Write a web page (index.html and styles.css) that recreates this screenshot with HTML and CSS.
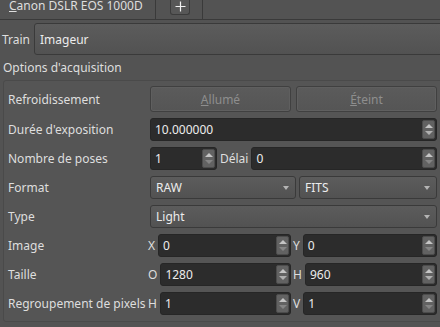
FILE: index.html
```html
<!DOCTYPE html>
<html lang="fr">
<head>
    <meta charset="UTF-8">
    <title>Canon DSLR EOS 1000D</title>
    <link rel="stylesheet" href="styles.css">
</head>
<body>
    <div class="tabbar">
        <div class="tab"><span class="tab-text"><u>C</u>anon DSLR EOS 1000D</span></div>
        <div class="corner">
            <div class="add">
                <svg width="11" height="11" viewBox="0 0 11 11"><path d="M5.5 0.5v10M0.5 5.5h10" stroke="#f2f2f2" stroke-width="1.2" fill="none"/></svg>
            </div>
        </div>
    </div>

    <div class="train-row">
        <span class="train-label">Train</span>
        <div class="combo train-combo">Imageur</div>
    </div>

    <div class="section-title">Options d'acquisition</div>

    <div class="group">
        <div class="row row-tall">
            <span class="label">Refroidissement</span>
            <div class="ctrl split">
                <button class="btn" disabled><u>A</u>llumé</button>
                <button class="btn" disabled><u>É</u>teint</button>
            </div>
        </div>

        <div class="row">
            <span class="label">Durée d'exposition</span>
            <div class="ctrl">
                <div class="spin grow"><span class="val">10.000000</span><span class="arrows"><i class="up"></i><i class="down"></i></span></div>
            </div>
        </div>

        <div class="row">
            <span class="label">Nombre de poses</span>
            <div class="ctrl">
                <div class="spin poses"><span class="val">1</span><span class="arrows"><i class="up"></i><i class="down off"></i></span></div>
                <span class="sub">Délai</span>
                <div class="spin grow"><span class="val">0</span><span class="arrows"><i class="up"></i><i class="down off"></i></span></div>
            </div>
        </div>

        <div class="row">
            <span class="label">Format</span>
            <div class="ctrl">
                <div class="combo format">RAW<i class="caret"></i></div>
                <div class="combo grow fits">FITS<i class="caret"></i></div>
            </div>
        </div>

        <div class="row">
            <span class="label">Type</span>
            <div class="ctrl">
                <div class="combo grow">Light<i class="caret"></i></div>
            </div>
        </div>

        <div class="row">
            <span class="label">Image</span>
            <div class="ctrl pair">
                <div class="half first"><span class="sub">X</span><div class="spin grow"><span class="val">0</span><span class="arrows"><i class="up"></i><i class="down off"></i></span></div></div>
                <div class="half"><span class="sub">Y</span><div class="spin grow"><span class="val">0</span><span class="arrows"><i class="up"></i><i class="down off"></i></span></div></div>
            </div>
        </div>

        <div class="row">
            <span class="label">Taille</span>
            <div class="ctrl pair">
                <div class="half first"><span class="sub">O</span><div class="spin grow"><span class="val">1280</span><span class="arrows"><i class="up"></i><i class="down"></i></span></div></div>
                <div class="half"><span class="sub">H</span><div class="spin grow"><span class="val">960</span><span class="arrows"><i class="up"></i><i class="down"></i></span></div></div>
            </div>
        </div>

        <div class="row">
            <span class="label">Regroupement de pixels</span>
            <div class="ctrl pair">
                <div class="half first"><span class="sub">H</span><div class="spin grow"><span class="val">1</span><span class="arrows"><i class="up"></i><i class="down off"></i></span></div></div>
                <div class="half"><span class="sub">V</span><div class="spin grow"><span class="val">1</span><span class="arrows"><i class="up"></i><i class="down off"></i></span></div></div>
            </div>
        </div>
    </div>
</body>
</html>
```

FILE: styles.css
```css
:root {
    --bg: #535353;
    --text: #dedede;
    --dim-text: #8e8e8e;
    --field: #2c2c2c;
    --edge: #3a3a3a;
}

* {
    margin: 0;
    padding: 0;
    box-sizing: border-box;
}

body {
    width: 440px;
    height: 327px;
    overflow: hidden;
    background-color: var(--bg);
    color: var(--text);
    font-family: "Noto Sans", "DejaVu Sans", sans-serif;
    font-size: 12px;
}

/* tab strip */
.tabbar {
    display: flex;
    height: 20px;
    border-bottom: 1px solid var(--edge);
}

.tab {
    width: 156px;
    border-right: 1px solid var(--edge);
    padding-left: 9px;
    overflow: hidden;
}

.tab-text {
    display: block;
    line-height: 14px;
    margin-top: -1px;
    white-space: nowrap;
}

.corner {
    width: 47px;
    border-right: 1px solid var(--edge);
    padding-left: 14px;
}

.add {
    width: 20px;
    height: 16px;
    margin-top: -1px;
    border: 1px solid #3c3c3c;
    border-top: none;
    border-radius: 0 0 3px 3px;
    background: #575757;
    display: flex;
    align-items: center;
    justify-content: center;
}

/* train row */
.train-row {
    display: flex;
    align-items: center;
    margin-top: 3px;
    height: 32px;
}

.train-label {
    width: 34px;
    padding-left: 2px;
}

.train-combo {
    flex: 1;
    height: 32px;
    margin-right: -8px;
    background: linear-gradient(#5e5e5e, #545454);
}

.section-title {
    height: 25px;
    line-height: 25px;
    padding-left: 3px;
}

/* group box */
.group {
    margin-left: 3px;
    margin-right: -6px;
    border: 1px solid #4a4a4a;
    border-radius: 3px;
    background: #555555;
    padding: 5px 8px 6px 4px;
    display: flex;
    flex-direction: column;
    gap: 6px;
}

.row {
    display: flex;
    align-items: center;
    height: 23px;
}

.row-tall {
    height: 26px;
}

.label {
    width: 142px;
    white-space: nowrap;
}

.ctrl {
    flex: 1;
    display: flex;
    align-items: center;
    height: 100%;
}

.split {
    gap: 5px;
}

.grow {
    flex: 1;
}

.sub {
    padding: 0 3px;
}

/* buttons */
.btn {
    flex: 1;
    height: 100%;
    border: 1px solid #404040;
    border-radius: 3px;
    background: linear-gradient(#5b5b5b, #555555);
    box-shadow: inset 0 0 0 1px #5f5f5f;
    color: var(--dim-text);
    font: inherit;
}

/* combo boxes */
.combo {
    display: flex;
    align-items: center;
    height: 100%;
    padding-left: 5px;
    border: 1px solid var(--edge);
    border-radius: 3px;
    background: linear-gradient(#5c5c5c, #525252);
    color: #ececec;
}

.format {
    width: 146px;
    margin-right: 3px;
}

.caret {
    margin-left: auto;
    margin-right: 6px;
    border-left: 3.5px solid transparent;
    border-right: 3.5px solid transparent;
    border-top: 4px solid #b4b4b4;
}

/* spin boxes */
.spin {
    display: flex;
    height: 100%;
    border: 1px solid #262626;
    border-radius: 3px;
    background: var(--field);
    color: #ececec;
}

.spin .val {
    flex: 1;
    padding-left: 4px;
    line-height: 21px;
}

.poses {
    width: 67px;
}

.arrows {
    width: 13px;
    margin: 1px;
    border: 1px solid #4c4c4c;
    border-radius: 2px;
    background: #626262;
    display: flex;
    flex-direction: column;
    align-items: center;
    justify-content: center;
    gap: 3px;
}

.up {
    border-left: 4px solid transparent;
    border-right: 4px solid transparent;
    border-bottom: 4px solid #c4c4c4;
}

.down {
    border-left: 4px solid transparent;
    border-right: 4px solid transparent;
    border-top: 4px solid #b0b0b0;
}

.down.off {
    border-top-color: #858585;
}

.pair {
    gap: 2px;
}

.half {
    display: flex;
    align-items: center;
    height: 100%;
    flex: 1;
}

.half.first {
    flex: none;
    width: 143px;
    margin-left: -2px;
}

.half .sub {
    padding: 0 3px 0 0;
}
```
